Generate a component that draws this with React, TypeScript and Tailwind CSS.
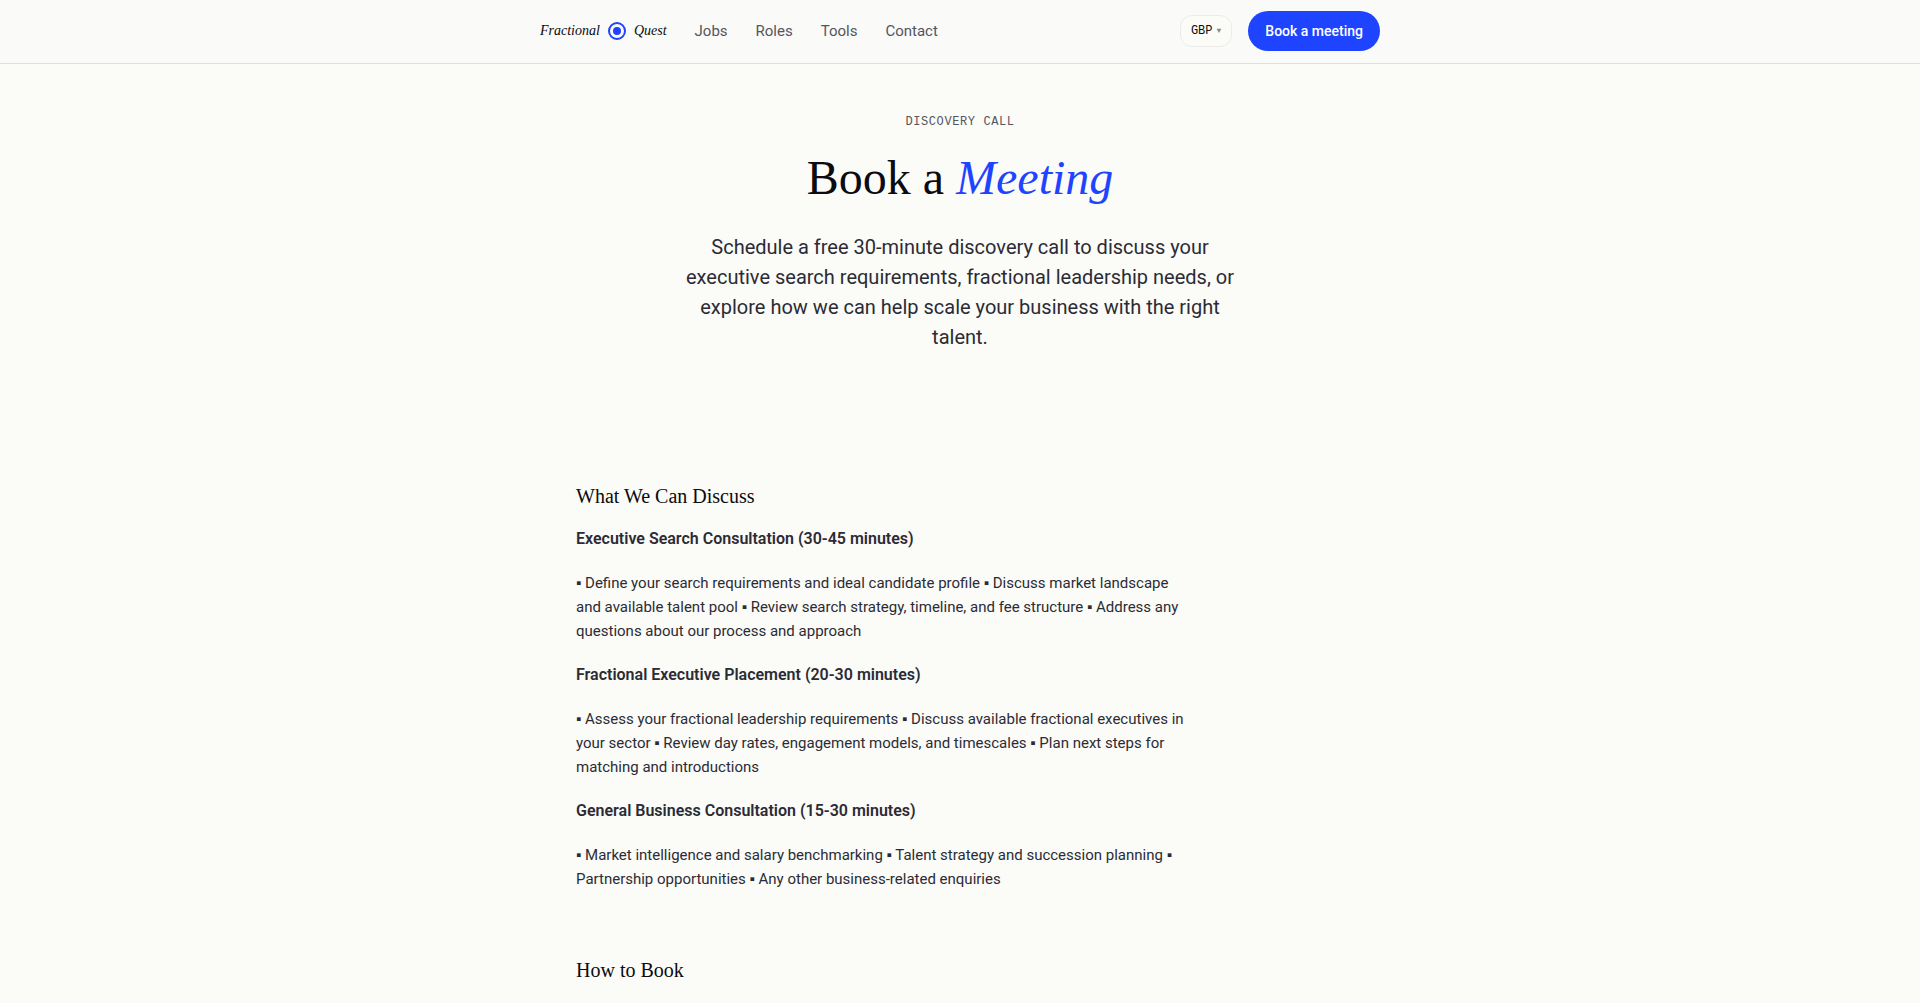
const links = ["Jobs", "Roles", "Tools", "Contact"];

type Topic = {
  title: string;
  points: string[];
};

const topics: Topic[] = [
  {
    title: "Executive Search Consultation (30-45 minutes)",
    points: [
      "Define your search requirements and ideal candidate profile",
      "Discuss market landscape and available talent pool",
      "Review search strategy, timeline, and fee structure",
      "Address any questions about our process and approach",
    ],
  },
  {
    title: "Fractional Executive Placement (20-30 minutes)",
    points: [
      "Assess your fractional leadership requirements",
      "Discuss available fractional executives in your sector",
      "Review day rates, engagement models, and timescales",
      "Plan next steps for matching and introductions",
    ],
  },
  {
    title: "General Business Consultation (15-30 minutes)",
    points: [
      "Market intelligence and salary benchmarking",
      "Talent strategy and succession planning",
      "Partnership opportunities",
      "Any other business-related enquiries",
    ],
  },
];

function Logo() {
  return (
    <a
      href="#"
      className="flex items-center gap-2 font-['Liberation_Serif',serif] text-sm leading-6 italic text-[#0b0b10]"
    >
      Fractional
      <svg width="18" height="18" viewBox="0 0 18 18" fill="none" aria-hidden="true">
        <circle cx="9" cy="9" r="8" stroke="#1f44ff" strokeWidth="2" />
        <circle cx="9" cy="9" r="4" fill="#1f44ff" />
      </svg>
      Quest
    </a>
  );
}

function Header() {
  return (
    <header className="border-b border-[#dfdfdc] bg-[#fafaf9]">
      <div className="mx-auto flex h-[63px] max-w-[840px] items-center justify-between pb-px">
        <nav className="flex items-center gap-7">
          <Logo />
          {links.map((l) => (
            <a key={l} href="#" className="text-[15px] leading-6 text-[#55555f]">
              {l}
            </a>
          ))}
        </nav>
        <div className="flex items-center gap-4">
          <button className="flex items-center gap-1 rounded-xl border border-[#ebebe8] bg-[#fbfbf7] px-[10px] py-[7px] font-['Liberation_Mono',monospace] text-xs leading-4 text-[#0b0b10]">
            GBP
            <span className="text-[8px] text-[#8a8a90]">▼</span>
          </button>
          <button className="rounded-full bg-[#1f44ff] px-[17px] py-2 text-sm leading-6 font-medium text-white">
            Book a meeting
          </button>
        </div>
      </div>
    </header>
  );
}

export default function App() {
  return (
    <div className="min-h-screen bg-[#fbfbf7] font-[Roboto,sans-serif] text-[#2b2b36]">
      <Header />
      <main>
        <section className="mx-auto max-w-[560px] pt-[50px] text-center">
          <p className="font-['Liberation_Mono',monospace] text-xs leading-4 tracking-wider text-[#55555f] uppercase">
            Discovery call
          </p>
          <h1 className="mt-[18px] font-['Liberation_Serif',serif] text-5xl leading-[60px] text-[#0b0b10]">
            Book a <em className="text-[#1f44ff]">Meeting</em>
          </h1>
          <p className="mt-6 text-xl leading-[30px]">
            Schedule a free 30-minute discovery call to discuss your executive search
            requirements, fractional leadership needs, or explore how we can help scale
            your business with the right talent.
          </p>
        </section>

        <div className="mx-auto flex max-w-3xl flex-col gap-16 pt-[129px]">
          <section className="max-w-[616px]">
            <h2 className="mb-4 font-['Liberation_Serif',serif] text-xl leading-[30px] text-[#0b0b10]">
              What We Can Discuss
            </h2>
            <div className="flex flex-col gap-5 text-[15px] leading-6">
              {topics.map((t) => (
                <div key={t.title} className="flex flex-col gap-5">
                  <h3 className="text-base leading-6 font-semibold">{t.title}</h3>
                  <p>{t.points.map((p) => `▪ ${p}`).join(" ")}</p>
                </div>
              ))}
            </div>
          </section>
          <section>
            <h2 className="font-['Liberation_Serif',serif] text-xl leading-[30px] text-[#0b0b10]">
              How to Book
            </h2>
          </section>
        </div>
      </main>
    </div>
  );
}
